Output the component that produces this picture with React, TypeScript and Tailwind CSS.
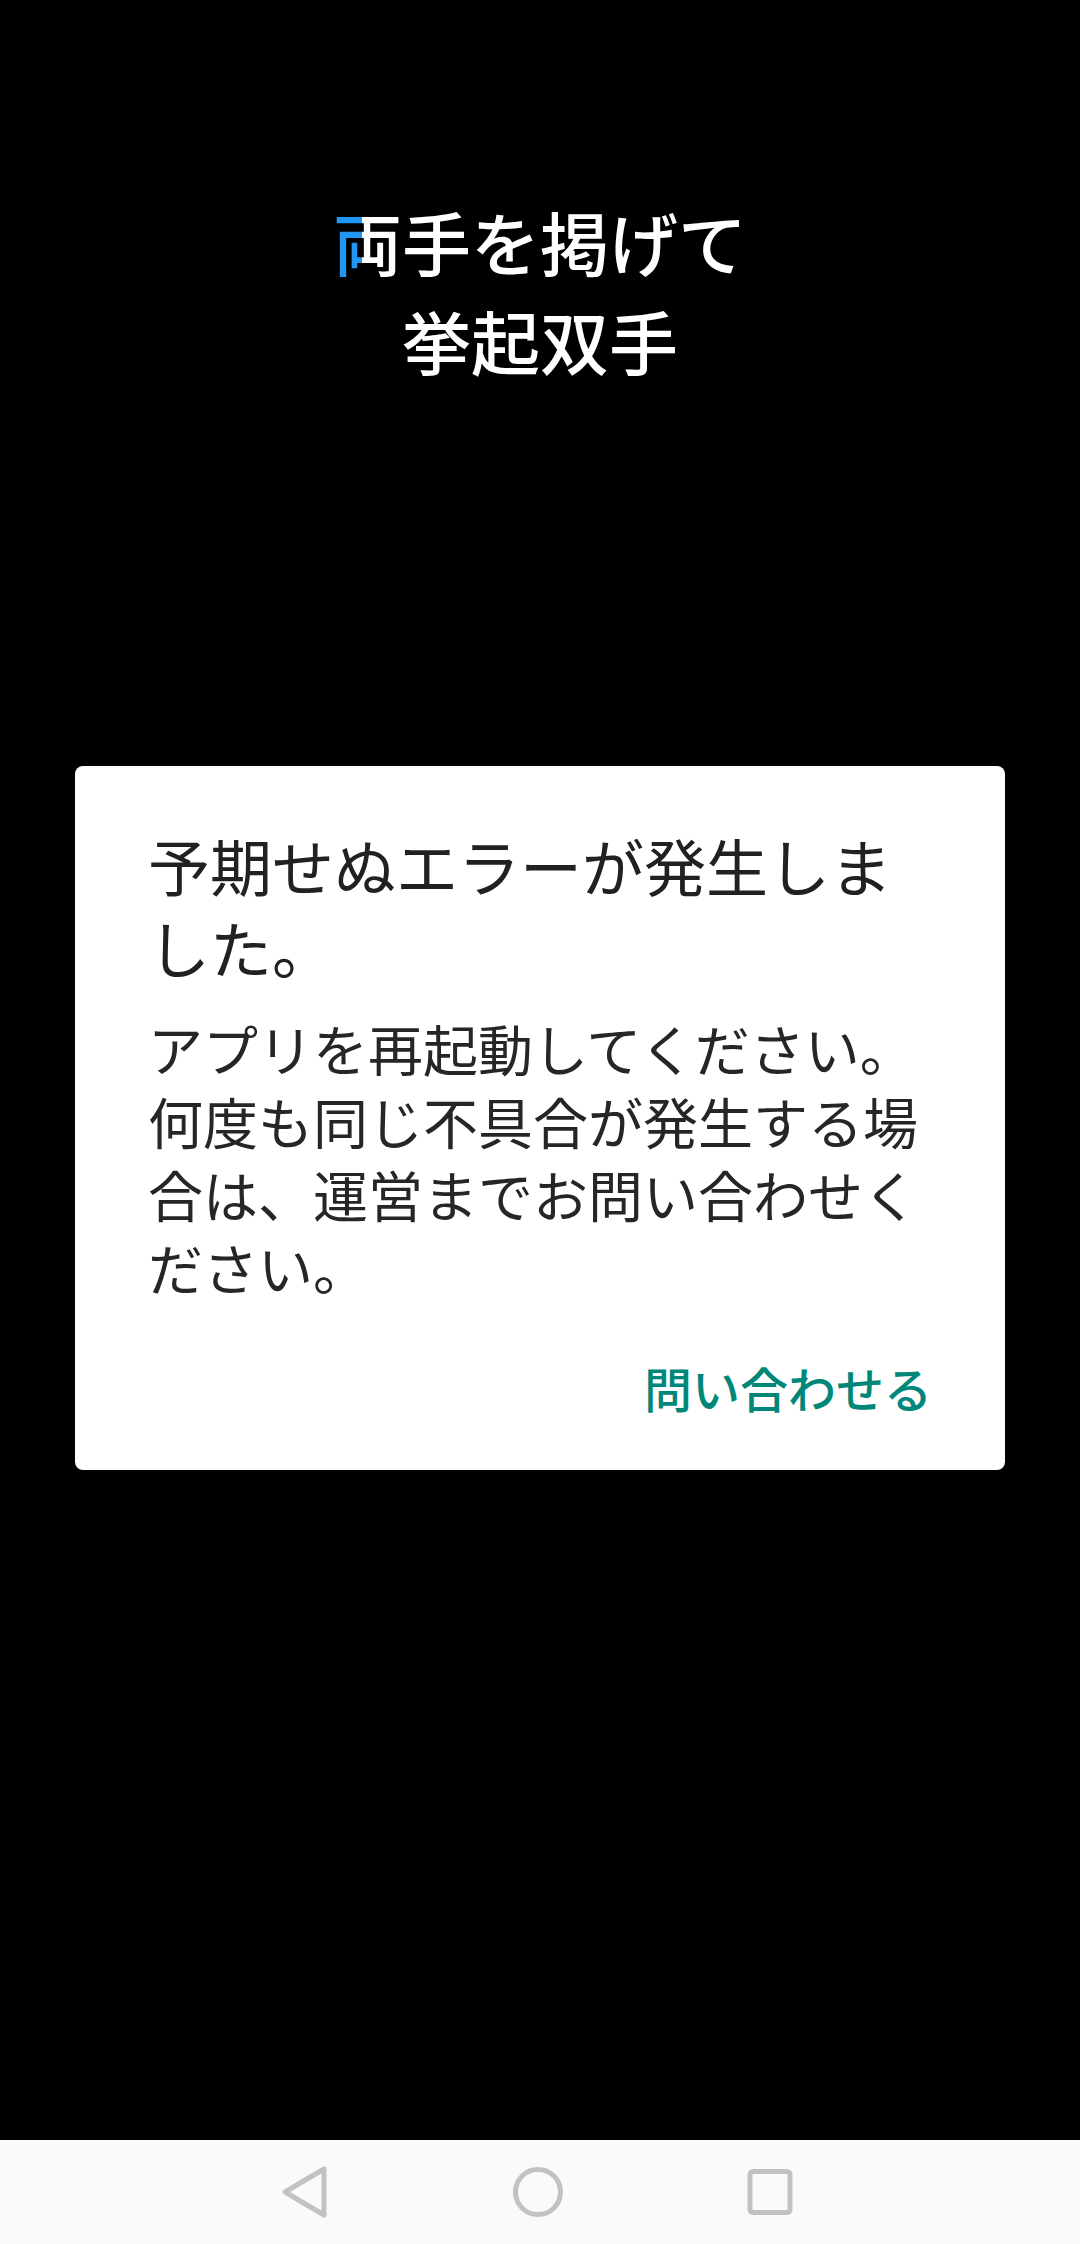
import React from "react";

const jp = "font-['Noto_Sans_CJK_JP','Noto_Sans',sans-serif]";

function NavBar() {
  return (
    <div className="h-[104px] bg-[#fafafa] flex items-center justify-center gap-[180px] shrink-0">
      {/* back */}
      <svg width="50" height="54" viewBox="0 0 50 54" className="-ml-[4px]">
        <path
          d="M43 4 L4 27 L43 50 Z"
          fill="none"
          stroke="#c2c2c2"
          strokeWidth="5"
          strokeLinejoin="round"
        />
      </svg>
      {/* home */}
      <svg width="54" height="54" viewBox="0 0 54 54">
        <circle cx="27" cy="27" r="22.5" fill="none" stroke="#c2c2c2" strokeWidth="5" />
      </svg>
      {/* recents */}
      <svg width="50" height="50" viewBox="0 0 50 50">
        <rect x="5" y="4.5" width="40" height="41" rx="3" fill="none" stroke="#c2c2c2" strokeWidth="5" />
      </svg>
    </div>
  );
}

export default function App() {
  return (
    <div className={`w-[1080px] h-[2244px] flex flex-col bg-black ${jp}`}>
      <div className="flex-1 flex flex-col">
        {/* ── prompt text ── */}
        <div className="pt-[192px] text-center text-white text-[69px] leading-[99px] font-medium">
          <p>
            <span className="bg-[linear-gradient(90deg,#2196f3_42%,#ffffff_42%)] bg-clip-text text-transparent">両</span>
            手を掲げて
          </p>
          <p>挙起双手</p>
        </div>

        {/* ── error dialog ── */}
        <div className="mt-[376px] mx-[75px] bg-white rounded-[8px] pt-[58px] pb-[53px]">
          <h2 className="pl-[73px] pr-[60px] text-[62px] leading-[82px] font-normal text-[#212121]">
            予期せぬエラーが発生しました。
          </h2>
          <p className="mt-[23px] pl-[73px] pr-[60px] text-[55px] leading-[73px] text-[#262626]">
            アプリを再起動してください。何度も同じ不具合が発生する場合は、運営までお問い合わせください。
          </p>
          <div className="mt-[54px] pr-[73px] flex justify-end">
            <button className="text-[48px] leading-[60px] font-medium text-[#00877a]">問い合わせる</button>
          </div>
        </div>
      </div>
      <NavBar />
    </div>
  );
}
